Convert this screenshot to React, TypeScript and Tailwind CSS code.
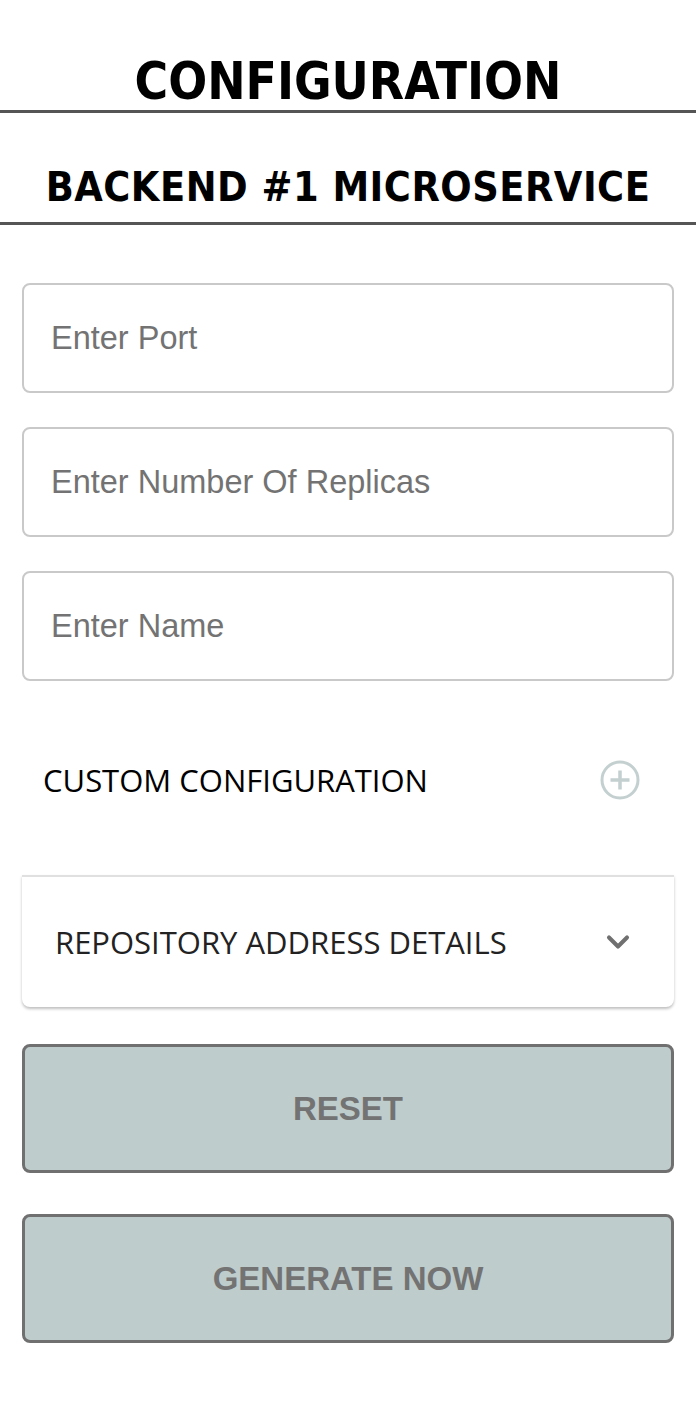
import { ChevronDown } from 'lucide-react';

const fields = ['Enter Port', 'Enter Number Of Replicas', 'Enter Name'];

const PlusCircle = () => (
  <svg width="42" height="42" viewBox="0 0 42 42" fill="none">
    <circle cx="21" cy="21" r="18" stroke="#c4d0d0" strokeWidth="3" />
    <path d="M21 11.5v19M11.5 21h19" stroke="#c4d0d0" strokeWidth="3.5" />
  </svg>
);

const App = () => {
  return (
    <div className="w-[696px] min-h-[1420px] bg-white pb-[76px]">
      {/* Title */}
      <div className="pt-[56px]">
        <h1 className="text-center text-[51px] leading-[51px] font-bold text-black [font-family:'DejaVu_Sans',sans-serif] [font-stretch:condensed]">
          CONFIGURATION
        </h1>
        <div className="mt-[3px] h-[3px] bg-[#555555]" />
      </div>

      <div className="pt-[54px]">
        <h2 className="text-center text-[41px] leading-[41px] font-bold text-black [font-family:'DejaVu_Sans',sans-serif] [font-stretch:condensed] tracking-[0.5px]">
          BACKEND #1 MICROSERVICE
        </h2>
        <div className="mt-[14px] h-[3px] bg-[#555555]" />
      </div>

      <form className="px-[22px] pt-[58px] flex flex-col">
        <div className="flex flex-col gap-[34px]">
          {fields.map((f) => (
            <input
              key={f}
              placeholder={f}
              className="h-[110px] w-full rounded-lg border-2 border-[#c9c9c9] bg-white px-[27px] text-[32.5px] text-[#333] placeholder:text-[#737373] [font-family:'Liberation_Sans',Arial,sans-serif] outline-none"
            />
          ))}
        </div>

        {/* Custom configuration */}
        <div className="mt-[68px] flex items-center justify-between pl-[21px] pr-[33px] h-[62px]">
          <span className="text-[31px] text-black [font-family:'Open_Sans',sans-serif]">
            CUSTOM CONFIGURATION
          </span>
          <PlusCircle />
        </div>

        {/* Accordion */}
        <div className="mt-[64px] h-[132px] rounded-b-lg border-t-2 border-[#e0e0e0] bg-white shadow-[0_2px_3px_rgba(0,0,0,0.25)] flex items-center justify-between pl-[33px] pr-[38px]">
          <span className="text-[31px] text-[#222] [font-family:'Open_Sans',sans-serif]">
            REPOSITORY ADDRESS DETAILS
          </span>
          <ChevronDown className="h-[36px] w-[36px] text-[#707070]" strokeWidth={2.7} />
        </div>

        <button
          type="button"
          className="mt-[37px] h-[129px] w-full rounded-lg border-[3px] border-[#707070] bg-[#bfcccc] text-[33px] font-bold text-[#737373] [font-family:'Liberation_Sans',Arial,sans-serif]"
        >
          RESET
        </button>
        <button
          type="button"
          className="mt-[41px] h-[129px] w-full rounded-lg border-[3px] border-[#707070] bg-[#bfcccc] text-[33px] font-bold text-[#737373] [font-family:'Liberation_Sans',Arial,sans-serif]"
        >
          GENERATE NOW
        </button>
      </form>
    </div>
  );
};

export default App;
